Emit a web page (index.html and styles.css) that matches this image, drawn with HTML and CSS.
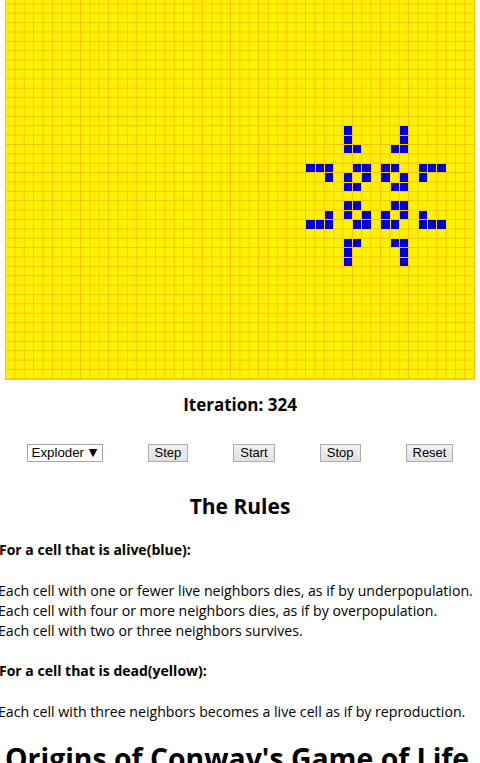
FILE: index.html
```html
<!DOCTYPE html>
<html>
<head>
<meta charset="utf-8">
<title>Conway's Game of Life</title>
<link rel="stylesheet" href="styles.css">
</head>
<body>
<div class="board">
  <div class="live" style="grid-area:15/37"></div>
  <div class="live" style="grid-area:15/43"></div>
  <div class="live" style="grid-area:16/37"></div>
  <div class="live" style="grid-area:16/43"></div>
  <div class="live" style="grid-area:17/37"></div>
  <div class="live" style="grid-area:17/38"></div>
  <div class="live" style="grid-area:17/42"></div>
  <div class="live" style="grid-area:17/43"></div>
  <div class="live" style="grid-area:19/33"></div>
  <div class="live" style="grid-area:19/34"></div>
  <div class="live" style="grid-area:19/35"></div>
  <div class="live" style="grid-area:19/38"></div>
  <div class="live" style="grid-area:19/39"></div>
  <div class="live" style="grid-area:19/41"></div>
  <div class="live" style="grid-area:19/42"></div>
  <div class="live" style="grid-area:19/45"></div>
  <div class="live" style="grid-area:19/46"></div>
  <div class="live" style="grid-area:19/47"></div>
  <div class="live" style="grid-area:20/35"></div>
  <div class="live" style="grid-area:20/37"></div>
  <div class="live" style="grid-area:20/39"></div>
  <div class="live" style="grid-area:20/41"></div>
  <div class="live" style="grid-area:20/43"></div>
  <div class="live" style="grid-area:20/45"></div>
  <div class="live" style="grid-area:21/37"></div>
  <div class="live" style="grid-area:21/38"></div>
  <div class="live" style="grid-area:21/42"></div>
  <div class="live" style="grid-area:21/43"></div>
  <div class="live" style="grid-area:23/37"></div>
  <div class="live" style="grid-area:23/38"></div>
  <div class="live" style="grid-area:23/42"></div>
  <div class="live" style="grid-area:23/43"></div>
  <div class="live" style="grid-area:24/35"></div>
  <div class="live" style="grid-area:24/37"></div>
  <div class="live" style="grid-area:24/39"></div>
  <div class="live" style="grid-area:24/41"></div>
  <div class="live" style="grid-area:24/43"></div>
  <div class="live" style="grid-area:24/45"></div>
  <div class="live" style="grid-area:25/33"></div>
  <div class="live" style="grid-area:25/34"></div>
  <div class="live" style="grid-area:25/35"></div>
  <div class="live" style="grid-area:25/38"></div>
  <div class="live" style="grid-area:25/39"></div>
  <div class="live" style="grid-area:25/41"></div>
  <div class="live" style="grid-area:25/42"></div>
  <div class="live" style="grid-area:25/45"></div>
  <div class="live" style="grid-area:25/46"></div>
  <div class="live" style="grid-area:25/47"></div>
  <div class="live" style="grid-area:27/37"></div>
  <div class="live" style="grid-area:27/38"></div>
  <div class="live" style="grid-area:27/42"></div>
  <div class="live" style="grid-area:27/43"></div>
  <div class="live" style="grid-area:28/37"></div>
  <div class="live" style="grid-area:28/43"></div>
  <div class="live" style="grid-area:29/37"></div>
  <div class="live" style="grid-area:29/43"></div>
</div>

<div class="iteration">Iteration: 324</div>

<div class="controls">
  <span class="select">Exploder <span class="arrow">▼</span></span>
  <button class="btn">Step</button>
  <button class="btn">Start</button>
  <button class="btn">Stop</button>
  <button class="btn">Reset</button>
</div>

<h2 class="rules-title">The Rules</h2>
<p class="rule-head">For a cell that is alive(blue):</p>
<p class="rule-text">Each cell with one or fewer live neighbors dies, as if by underpopulation.<br>Each cell with four or more neighbors dies, as if by overpopulation.<br>Each cell with two or three neighbors survives.</p>
<p class="rule-head">For a cell that is dead(yellow):</p>
<p class="rule-text">Each cell with three neighbors becomes a live cell as if by reproduction.</p>
<h1 class="origins">Origins of Conway's Game of Life</h1>
</body>
</html>
```
FILE: styles.css
```css
html, body {
  margin: 0;
  padding: 0;
  background: #ffffff;
  color: #000000;
  font-family: "Open Sans", "Noto Sans", sans-serif;
}

.board {
  box-sizing: content-box;
  width: 469px;
  height: 384.6px;
  margin: -6px 0 0 5px;
  display: grid;
  grid-template-columns: repeat(50, 1fr);
  grid-template-rows: repeat(41, 1fr);
  background-color: #fff200;
  background-image:
    linear-gradient(to right, #ffc20a 1px, transparent 1px),
    linear-gradient(to bottom, #ffc20a 1px, transparent 1px);
  background-size: 9.38px 9.38px;
  border-right: 1px solid #ffc20a;
  border-bottom: 1px solid #ffc20a;
}

.live {
  background: #0000cc;
  margin: 1px 0 0 1px;
}

.iteration {
  margin-top: 15px;
  text-align: center;
  font-weight: bold;
  font-size: 17px;
  line-height: 20px;
}

.controls {
  margin-top: 29px;
  display: flex;
  justify-content: center;
  align-items: center;
  gap: 45px;
}

.select {
  display: inline-flex;
  align-items: center;
  box-sizing: border-box;
  width: 76px;
  height: 18px;
  padding: 0 4px;
  border: 1px solid #a6a6a6;
  background: #ffffff;
  font-family: "Liberation Sans", Arial, sans-serif;
  font-size: 13.3px;
  white-space: pre;
}

.arrow {
  font-family: "DejaVu Sans", sans-serif;
  font-size: 11px;
  margin-left: 1px;
}

.btn {
  box-sizing: border-box;
  height: 18px;
  padding: 0 6px;
  border: 1px solid #adadad;
  border-radius: 0;
  background: linear-gradient(#f2f2f2, #e0e0e0);
  font-family: "Liberation Sans", Arial, sans-serif;
  font-size: 13px;
  color: #000;
  line-height: 14px;
}

.rules-title {
  margin: 30px 0 0;
  text-align: center;
  font-size: 21px;
  line-height: 28px;
  font-weight: bold;
}

.rule-head {
  margin: 20px 0 0 -1px;
  font-size: 14px;
  font-weight: bold;
  line-height: 20px;
}

.rule-text {
  margin: 21px 0 0 -2px;
  font-size: 14.15px;
  line-height: 20px;
}

.origins {
  margin: 16px 0 0 5px;
  font-size: 28.4px;
  line-height: 40px;
  font-weight: bold;
  white-space: nowrap;
}
```
